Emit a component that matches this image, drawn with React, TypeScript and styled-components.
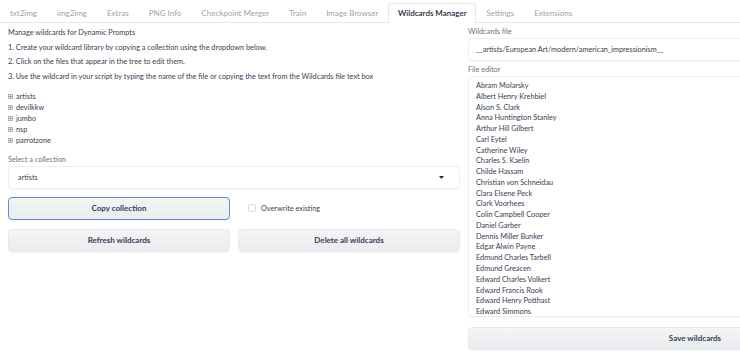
import React from "react";
import styled, { createGlobalStyle } from "styled-components";

const GlobalStyle = createGlobalStyle`
  html, body {
    margin: 0;
    padding: 0;
    background: #ffffff;
    overflow: hidden;
  }
  body {
    font-family: Lato, "Liberation Sans", sans-serif;
    color: #374151;
  }
  * { box-sizing: border-box; }
`;

const Page = styled.div`
  width: 930px;
  height: 352px;
`;

const TabBar = styled.nav`
  display: flex;
  align-items: flex-end;
  height: 23px;
  border-bottom: 1px solid #e5e7eb;
`;

const Tab = styled.div<{ $active?: boolean }>`
  height: 20px;
  margin-bottom: -1px;
  padding: 0 ${(p) => (p.$active ? 8.5 : 9)}px;
  line-height: 18px;
  font-size: 8px;
  white-space: nowrap;
  border: 1px solid ${(p) => (p.$active ? "#e5e7eb" : "transparent")};
  border-bottom: none;
  border-radius: 3px 3px 0 0;
  background: ${(p) => (p.$active ? "#ffffff" : "transparent")};
  color: ${(p) => (p.$active ? "#1f2937" : "#9ca3af")};
  font-weight: ${(p) => (p.$active ? 600 : 400)};
`;

const Panel = styled.main`
  display: grid;
  grid-template-columns: 452px 454px;
  column-gap: 8px;
  padding: 3px 8px 0;
`;

const Column = styled.section`
  display: flex;
  flex-direction: column;
`;

const Intro = styled.div`
  font-size: 7.3px;
  line-height: 14.67px;
  color: #374151;
`;

const Para = styled.p`
  margin: 0;
`;

const Tree = styled.ul`
  list-style: none;
  margin: 6px 0 0;
  padding: 0;
  font-size: 7.3px;
  line-height: 11px;
  color: #374151;
`;

const TreeItem = styled.li`
  display: flex;
  align-items: center;
  gap: 3px;
`;

const Label = styled.div<{ $top?: number }>`
  margin-top: ${(p) => p.$top ?? 0}px;
  margin-bottom: 1px;
  font-size: 7.3px;
  line-height: 10px;
  color: #6b7280;
`;

const SelectBox = styled.div`
  display: flex;
  align-items: center;
  justify-content: space-between;
  height: 23px;
  padding: 0 15px 0 9px;
  border: 1px solid #eceef1;
  border-radius: 4px;
  background: #ffffff;
  box-shadow: 0 1px 1px rgba(0, 0, 0, 0.03);
  font-size: 7.3px;
  color: #374151;
`;

const Row = styled.div<{ $top: number }>`
  display: grid;
  grid-template-columns: 1fr 1fr;
  column-gap: 8px;
  align-items: center;
  margin-top: ${(p) => p.$top}px;
`;

const Button = styled.button<{ $focus?: boolean }>`
  height: 23px;
  width: 100%;
  padding: 0;
  border: ${(p) => (p.$focus ? "1.5px solid #5b8fd3" : "1px solid #e7e9ec")};
  border-radius: 4px;
  background: linear-gradient(180deg, #f4f5f7 0%, #e9ebee 100%);
  box-shadow: 0 1px 1px rgba(0, 0, 0, 0.04);
  font-family: inherit;
  font-size: 8px;
  font-weight: 700;
  color: #374151;
`;

const CheckLabel = styled.label`
  display: flex;
  align-items: center;
  gap: 5px;
  padding-left: 10px;
  font-size: 7.3px;
  color: #374151;
`;

const CheckBox = styled.span`
  display: inline-block;
  width: 8px;
  height: 8px;
  border: 1px solid #d9dce1;
  border-radius: 2px;
  background: #ffffff;
`;

const TextInput = styled.div`
  display: flex;
  align-items: center;
  height: 23px;
  padding: 0 7px;
  border: 1px solid #eceef1;
  border-radius: 4px;
  background: #ffffff;
  box-shadow: 0 1px 1px rgba(0, 0, 0, 0.03);
  font-size: 7.3px;
  color: #374151;
  white-space: nowrap;
`;

const Editor = styled.textarea`
  display: block;
  height: 241px;
  width: 100%;
  margin: 0;
  padding: 4px 7px;
  border: 1px solid #eceef1;
  border-radius: 4px;
  background: #ffffff;
  box-shadow: 0 1px 1px rgba(0, 0, 0, 0.03);
  font-family: inherit;
  font-size: 7.3px;
  line-height: 10.76px;
  color: #374151;
  resize: none;
  overflow: hidden;
  outline: none;
`;

const SaveRow = styled.div`
  margin-top: 8px;
`;

const PlusBox = () => (
  <svg width="5" height="5" viewBox="0 0 5 5">
    <rect x="0.5" y="0.5" width="4" height="4" fill="none" stroke="#9ca3af" strokeWidth="0.8" />
    <path d="M1.3 2.5h2.4M2.5 1.3v2.4" stroke="#6b7280" strokeWidth="0.8" />
  </svg>
);

const Caret = () => (
  <svg width="5" height="3" viewBox="0 0 5 3">
    <path d="M0 0h5L2.5 3z" fill="#1f2937" />
  </svg>
);

const tabs = [
  "txt2img",
  "img2img",
  "Extras",
  "PNG Info",
  "Checkpoint Merger",
  "Train",
  "Image Browser",
  "Wildcards Manager",
  "Settings",
  "Extensions",
];

const collections = ["artists", "devilkkw", "jumbo", "nsp", "parrotzone"];

const artists = [
  "Abram Molarsky",
  "Albert Henry Krehbiel",
  "Alson S. Clark",
  "Anna Huntington Stanley",
  "Arthur Hill Gilbert",
  "Carl Eytel",
  "Catherine Wiley",
  "Charles S. Kaelin",
  "Childe Hassam",
  "Christian von Schneidau",
  "Clara Elsene Peck",
  "Clark Voorhees",
  "Colin Campbell Cooper",
  "Daniel Garber",
  "Dennis Miller Bunker",
  "Edgar Alwin Payne",
  "Edmund Charles Tarbell",
  "Edmund Greacen",
  "Edward Charles Volkert",
  "Edward Francis Rook",
  "Edward Henry Potthast",
  "Edward Simmons",
  "Emil Carlsen",
  "Ernest Lawson",
];

export default function App() {
  return (
    <>
      <GlobalStyle />
      <Page>
        <TabBar>
          {tabs.map((t) => (
            <Tab key={t} $active={t === "Wildcards Manager"}>
              {t}
            </Tab>
          ))}
        </TabBar>
        <Panel>
          <Column>
            <Intro>
              <Para>Manage wildcards for Dynamic Prompts</Para>
              <Para>1. Create your wildcard library by copying a collection using the dropdown below.</Para>
              <Para>2. Click on the files that appear in the tree to edit them.</Para>
              <Para>3. Use the wildcard in your script by typing the name of the file or copying the text from the Wildcards file text box</Para>
            </Intro>
            <Tree>
              {collections.map((c) => (
                <TreeItem key={c}>
                  <PlusBox />
                  {c}
                </TreeItem>
              ))}
            </Tree>
            <Label $top={9}>Select a collection</Label>
            <SelectBox>
              <span>artists</span>
              <Caret />
            </SelectBox>
            <Row $top={8}>
              <Button $focus>Copy collection</Button>
              <CheckLabel>
                <CheckBox />
                Overwrite existing
              </CheckLabel>
            </Row>
            <Row $top={9}>
              <Button>Refresh wildcards</Button>
              <Button>Delete all wildcards</Button>
            </Row>
          </Column>
          <Column>
            <Label $top={1}>Wildcards file</Label>
            <TextInput>__artists/European Art/modern/american_impressionism__</TextInput>
            <Label $top={4}>File editor</Label>
            <Editor readOnly value={artists.join("\n")} />
            <SaveRow>
              <Button>Save wildcards</Button>
            </SaveRow>
          </Column>
        </Panel>
      </Page>
    </>
  );
}
